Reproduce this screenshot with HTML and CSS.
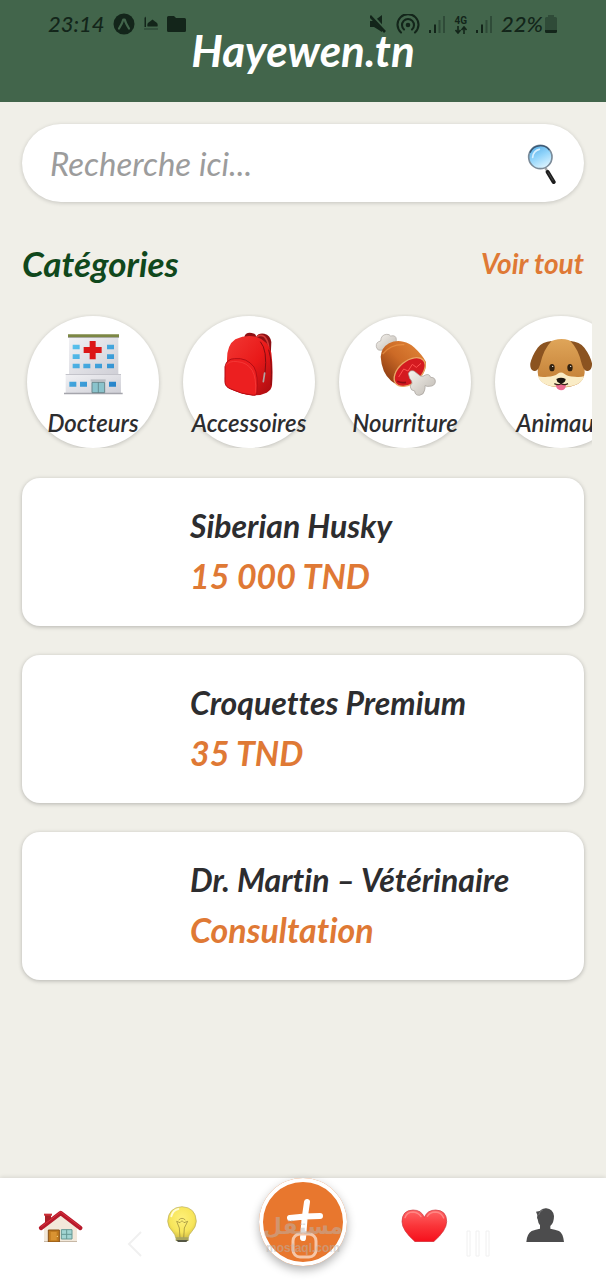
FILE: index.html
```html
<!DOCTYPE html>
<html lang="fr">
<head>
<meta charset="utf-8">
<meta name="viewport" content="width=device-width, initial-scale=1">
<title>Hayewen.tn</title>
<link rel="stylesheet" href="styles.css">
</head>
<body>
<header class="header">
  <h1 class="brand">Hayewen.tn</h1>
  <div class="status">
    <div class="status-group">
      <span class="status-text">23:14</span>
      <svg width="22" height="22" viewBox="0 0 22 22"><circle cx="11" cy="11" r="10.500" fill="#13251a"/><path d="M6 15.500Q9.500 10 10.300 6.500h1.400Q12.500 10 16 15.500" fill="none" stroke="#42654b" stroke-width="2.200" stroke-linecap="round" stroke-linejoin="round"/></svg>
      <svg width="16" height="16" viewBox="0 0 16 16"><path d="M1.500 2l.8-1.500L3 2v9H1.500zM4.500 10.500q-1-3.500 2.500-5l2.500-2 2.500 2q3.500 1.500 2.500 5z" fill="#13251a"/><path d="M1 13h14" stroke="#2f4b38" stroke-width="1.500"/></svg>
      <svg width="19" height="16" viewBox="0 0 19 16"><path d="M0 1.500Q0 0 1.500 0H7l2 2h8.500Q19 2 19 3.500V14.500Q19 16 17.500 16h-16Q0 16 0 14.500z" fill="#13251a"/></svg>
    </div>
    <div class="status-group status-right">
      <svg width="17" height="18" viewBox="0 0 17 18"><path d="M0 6h4l8-6v17l-8-5H0z" fill="#13251a"/><path d="M1 0l15 17" stroke="#42654b" stroke-width="4"/><path d="M0 1l15 16" stroke="#13251a" stroke-width="2.600"/></svg>
      <svg width="24" height="20" viewBox="0 0 24 20"><g fill="none" stroke="#13251a" stroke-width="2.100" stroke-linecap="round"><path d="M5 18.500a10.500 10.500 0 1 1 14 0"/><path d="M8 15.500a6 6 0 1 1 8 0"/></g><circle cx="12" cy="11" r="2.300" fill="#13251a"/></svg>
      <svg width="16" height="17" viewBox="0 0 16 17"><path d="M0 14h2v3H0zM5 8.500h2V17H5z" fill="#13251a"/><path d="M9.500 4h2v13h-2zM14 0h2v17h-2z" fill="#2f4b38"/></svg>
      <span class="network">4G<svg width="12" height="8" viewBox="0 0 12 8"><path d="M3 0v6M.500 4L3 7l2.500-3M9 8V2M6.500 4L9 1l2.500 3" stroke="#13251a" stroke-width="1.600" fill="none"/></svg></span>
      <svg width="16" height="17" viewBox="0 0 16 17"><path d="M0 14h2v3H0zM5 8.500h2V17H5z" fill="#13251a"/><path d="M9.500 4h2v13h-2zM14 0h2v17h-2z" fill="#2f4b38"/></svg>
      <span class="status-text battery">22%<svg width="12" height="18" viewBox="0 0 12 18"><path d="M3 2V0h6v2h1.500Q12 2 12 3.500V15H0V3.500Q0 2 1.500 2z" fill="#2f4b38"/><path d="M0 15h12v1.500Q12 18 10.500 18h-9Q0 18 0 16.500z" fill="#13251a"/></svg></span>
    </div>
  </div>
</header>

<main class="content">
  <form class="search">
    <input class="search-input" type="search" placeholder="Recherche ici..." aria-label="Recherche">
    <button class="search-button" type="button" aria-label="Rechercher">
      <svg width="32" height="42" viewBox="666 96 96 126">
        <defs><linearGradient id="lens" x1=".2" y1="0" x2=".7" y2="1"><stop offset="0" stop-color="#54aee8"/><stop offset=".5" stop-color="#95d6fb"/><stop offset="1" stop-color="#e2f6ff"/></linearGradient></defs>
        <path d="M724 174l8 12" stroke="#a5a5a5" stroke-width="7"/>
        <path d="M731 186l18 30" stroke="#1c1c1c" stroke-width="12" stroke-linecap="round"/>
        <path d="M732 187l15 25" stroke="#5b5b5b" stroke-width="2"/>
        <circle cx="709" cy="141" r="35" fill="url(#lens)" stroke="#7b8b99" stroke-width="5"/>
        <path d="M678 128a34 34 0 0 1 58-8" fill="none" stroke="#375775" stroke-width="4"/>
        <path d="M686 142q2-20 20-24" fill="none" stroke="#d7f0ff" stroke-width="5" stroke-linecap="round"/>
      </svg>
    </button>
  </form>

  <div class="section-head">
    <h2 class="section-title">Catégories</h2>
    <a class="see-all" href="#">Voir tout</a>
  </div>

  <div class="categories">
    <a class="category" href="#">
      <svg class="category-icon" viewBox="153 80 192 192">
        <defs><linearGradient id="wall" x1="0" y1="0" x2="1" y2="1"><stop offset="0" stop-color="#f1f1f4"/><stop offset="1" stop-color="#cfcfd6"/></linearGradient>
        <linearGradient id="glass" x1="0" y1="0" x2="1" y2="1"><stop offset="0" stop-color="#5cc4ee"/><stop offset="1" stop-color="#2682c9"/></linearGradient></defs>
        <path d="M177 96h148v114H177z" fill="url(#wall)"/>
        <path d="M174 87h153v10H174z" fill="#7c8744"/><path d="M174 95h153v3H174z" fill="#a8a9a2"/>
        <path d="M167 207h166v57H167z" fill="url(#wall)"/><path d="M167 206h166v3H167z" fill="#c4c4cb"/>
        <path d="M162 262h176v5H162z" fill="#a5a5ac"/>
        <path d="M239 107h18v18h18v18h-18v19h-18v-19h-18v-18h18z" fill="#dc1717"/>
        <path d="M188 118h21v14h-21zM188 147h21v14h-21zM188 175h21v14h-21zM220 175h21v14h-21zM255 175h21v14h-21zM291 118h21v14h-21zM291 147h21v14h-21zM291 175h21v14h-21zM178 229h21v15h-21zM210 229h21v15h-21zM297 229h21v15h-21z" fill="url(#glass)"/>
        <path d="M242 222h45v7h-45z" fill="#bbbec4"/><path d="M246 231h38v31h-38z" fill="#8ac3cc" stroke="#68878d" stroke-width="3"/><path d="M265 231v31" stroke="#547379" stroke-width="2"/>
      </svg>
      <span class="category-label">Docteurs</span>
    </a>
    <a class="category" href="#">
      <svg class="category-icon" viewBox="622 80 192 192">
        <defs><linearGradient id="bag" x1="0" y1="0" x2="1" y2="1"><stop offset="0" stop-color="#f23a35"/><stop offset=".55" stop-color="#e91919"/><stop offset="1" stop-color="#a60b10"/></linearGradient></defs>
        <path d="M704 94q4-14 22-11 12 1 14 11 6-12 24-9 18 4 21 25l-2 45-40-40z" fill="#8e1014"/>
        <path d="M742 94q10-8 22 0 12 12 13 34" fill="none" stroke="#d33a37" stroke-width="5"/>
        <path d="M652 166q-1-47 25-64 33-16 64-7 33 10 44 47 6 48 2 98-1 14-16 22-19 9-38 8-37-3-72-20-15-7-15-18-2-31 6-66z" fill="url(#bag)"/>
        <path d="M646 184q5-24 29-24 36-4 58 25 14 24 8 82-4 3-10 3-35-3-70-20-14-6-15-19z" fill="#ec1f20" stroke="#b20d14" stroke-width="3"/>
        <path d="M648 181q12-16 35-12 30 2 45 27 12 22 10 66" fill="none" stroke="#f8423f" stroke-width="2"/>
        <path d="M752 109q22 25 14 95l-4 20M777 133q12 40 7 106" fill="none" stroke="#850c11" stroke-width="3"/>
        <path d="M765 203l-4 26" stroke="#b6a3a1" stroke-width="5" stroke-linecap="round"/>
      </svg>
      <span class="category-label">Accessoires</span>
    </a>
    <a class="category" href="#">
      <svg class="category-icon" viewBox="159 80 192 192">
        <defs><linearGradient id="crust" x1="1" y1="0" x2="0" y2="1"><stop offset="0" stop-color="#e58a3c"/><stop offset=".5" stop-color="#cc6a26"/><stop offset="1" stop-color="#782d0c"/></linearGradient>
        <linearGradient id="bone" x1="0" y1="0" x2="1" y2="1"><stop offset="0" stop-color="#f7f4ef"/><stop offset="1" stop-color="#bdb8b1"/></linearGradient></defs>
        <path d="M169 124q-2-14 13-17 1-19 18-20 8-1 12 5 16-4 17 10 1 8-4 13l-28 23q-5 1-8-4-18 4-20-10z" fill="url(#bone)" stroke="#aaa59f" stroke-width="2"/>
        <path d="M182 154q2-27 25-40 20-10 43-5 18 3 32 17 24 22 36 44 2 26-17 46-20 22-45 24-26 1-43-14-28-24-31-72z" fill="url(#crust)"/>
        <path d="M188 146q24-30 65-28" fill="none" stroke="#f19d4d" stroke-width="4" opacity=".6"/>
        <ellipse cx="269" cy="200" rx="54" ry="33" transform="rotate(-40 269 200)" fill="#d41a20" stroke="#e8a765" stroke-width="4"/>
        <path d="M236 215l15-24 13 6 13-20 12 9 14-12" fill="none" stroke="#ff5250" stroke-width="3"/>
        <path d="M232 228q12 6 26 3" fill="none" stroke="#900d14" stroke-width="5"/>
        <path d="M265 205q4-12 17-8l19 15q8 3 15-3 12-5 16 7 15 0 14 14-2 13-19 13-5 1-12-2 1 6-1 13-2 14-15 16-14 1-15-13-12-1-13-12-1-6 5-11 1-6-7-15z" fill="url(#bone)" stroke="#a29c96" stroke-width="2"/>
      </svg>
      <span class="category-label">Nourriture</span>
    </a>
    <a class="category" href="#">
      <svg class="category-icon" viewBox="630 80 192 192">
        <defs><linearGradient id="fur" x1="0" y1="0" x2="0" y2="1"><stop offset="0" stop-color="#dfa559"/><stop offset="1" stop-color="#c17c33"/></linearGradient></defs>
        <path d="M656 200q2 45 70 46 67 0 71-44 1-31-12-55-13-46-57-46-47 0-58 44-14 24-14 55z" fill="url(#fur)"/>
        <path d="M698 107q-28 2-42 20-17 24-22 47-2 20 11 23 11 2 18-19 11-48 35-71zM754 107q28 2 42 20 18 24 23 47 1 20-12 23-11 2-18-19-11-48-35-71z" fill="#8b5320"/>
        <path d="M657 213q12 3 28 1 22-1 31-9 10-7 20 0 9 9 32 9 14 3 27-1-8 32-69 32-59 0-69-32z" fill="#faecc6"/>
        <ellipse cx="699" cy="187" rx="8" ry="11" fill="#30200f"/><ellipse cx="753" cy="187" rx="8" ry="11" fill="#30200f"/>
        <circle cx="701" cy="183" r="2" fill="#fff"/><circle cx="755" cy="183" r="2" fill="#fff"/>
        <path d="M710 239q16-6 31 0-1 16-15 16-14-2-16-16z" fill="#ed6b91"/>
        <path d="M726 224v13M706 235q12 6 20 0 10 6 21 0" fill="none" stroke="#392519" stroke-width="4"/>
        <path d="M712 221q14-8 28 0-1 10-9 12-5 3-10 0-8-3-9-12z" fill="#19130f"/>
      </svg>
      <span class="category-label">Animaux</span>
    </a>
  </div>

  <section class="cards">
    <article class="card"><div class="thumb"></div><div><h3 class="card-name">Siberian Husky</h3><p class="card-price">15 000 TND</p></div></article>
    <article class="card"><div class="thumb"></div><div><h3 class="card-name">Croquettes Premium</h3><p class="card-price">35 TND</p></div></article>
    <article class="card"><div class="thumb"></div><div><h3 class="card-name">Dr. Martin – Vétérinaire</h3><p class="card-price">Consultation</p></div></article>
  </section>
</main>

<nav class="tabs">
  <a class="tab" href="#" aria-label="Accueil">
    <svg width="48" height="36" viewBox="111 108 144 108">
      <path d="M135 133h18v35h-18z" fill="#a82027"/><path d="M132 131h24v6h-24z" fill="#cc3038"/>
      <path d="M132 172l50-42 49 42v44h-99z" fill="#f2e8da"/><path d="M132 213h99v3h-99z" fill="#c7b8a6"/>
      <path d="M145 180h33v36h-33z" fill="#c17b1f" stroke="#875015" stroke-width="3"/><path d="M152 186h18v25h-18z" fill="#d99332"/><circle cx="172" cy="199" r="2" fill="#fbe192"/>
      <path d="M184 179h32v28h-32z" fill="#a1d4d2" stroke="#649894" stroke-width="3"/><path d="M200 179v28M184 193h32" stroke="#649894" stroke-width="3"/>
      <path d="M123 174l59-45 59 45" fill="none" stroke="#b71a2b" stroke-width="13" stroke-linecap="round" stroke-linejoin="round"/><path d="M124 170l58-44 58 44" fill="none" stroke="#d9323f" stroke-width="3"/>
    </svg>
  </a>
  <a class="tab" href="#" aria-label="Conseils">
    <svg width="48" height="36" viewBox="473 108 144 108">
      <defs><radialGradient id="bulb" cx=".5" cy=".4" r=".6"><stop offset="0" stop-color="#fff17b"/><stop offset=".7" stop-color="#f7e55a"/><stop offset="1" stop-color="#d9c548"/></radialGradient></defs>
      <path d="M526 203q-1-9-9-18-14-13-15-31 2-42 43-44 41 2 43 44-1 18-14 31-9 9-10 18z" fill="url(#bulb)" stroke="#b9ad5c" stroke-width="2"/>
      <path d="M539 205l-2-31-8-20 10 4 6-6 6 6 11-4-10 20-2 31M535 150q10-10 20 0" fill="none" stroke="#8f8136" stroke-width="2"/>
      <path d="M513 139q5-19 21-22" stroke="#fffbd2" stroke-width="6" fill="none" stroke-linecap="round"/>
      <path d="M526 202h39v10q-19 5-39 0z" fill="#aaa65d"/><path d="M528 210h35l-5 6h-25z" fill="#555744"/>
    </svg>
  </a>
  <div class="tab-center">
    <button class="add" type="button" aria-label="Ajouter">
      <svg width="88" height="88" viewBox="0 0 88 88">
        <path d="M48 24q-3 17-4 36M31 40q15-2 30-2" fill="none" stroke="#fff" stroke-width="6" stroke-linecap="round"/>
        <rect x="34" y="56" width="23" height="23" rx="7" fill="none" stroke="#f5c6a8" stroke-width="3"/>
      </svg>
    </button>
    <div class="watermark"><span class="mark-ar" lang="ar">مستقل</span><span class="mark-en">mostaql.com</span></div>
  </div>
  <a class="tab" href="#" aria-label="Favoris">
    <svg width="48" height="36" viewBox="30 108 144 108">
      <defs><linearGradient id="heart" x1="0" y1="0" x2="0" y2="1"><stop offset="0" stop-color="#ff6565"/><stop offset=".5" stop-color="#fa3539"/><stop offset="1" stop-color="#f60f1b"/></linearGradient></defs>
      <path d="M75 215Q36 181 36 155q0-34 33-35 25 0 34 22 9-22 34-22 33 1 33 35 0 26-39 60z" fill="url(#heart)" stroke="#c9353c" stroke-width="2"/>
      <path d="M45 143q6-17 24-17 16 1 24 14M112 139q8-13 25-13 17 1 24 18" fill="none" stroke="#ff8684" stroke-width="4" stroke-linecap="round"/>
    </svg>
  </a>
  <a class="tab" href="#" aria-label="Profil">
    <svg width="48" height="36" viewBox="393 108 144 108">
      <path d="M409 216q2-25 16-33 12-4 25-7v-10q-6-7-7-18-3-4-1-13l-4-10 11-2q8-9 20-8 20 2 23 23 0 21-11 30v8q14 3 26 7 12 6 15 33z" fill="#4c4c4d"/>
      <path d="M446 135q3-12 13-16" fill="none" stroke="#8a8a8a" stroke-width="2"/>
    </svg>
  </a>
  <svg class="sys-back" width="16" height="28" viewBox="0 0 16 28"><path d="M14 2L2 14l12 12" fill="none" stroke="#f0f0f0" stroke-width="2"/></svg>
  <svg class="sys-recent" width="26" height="28" viewBox="0 0 26 28"><path d="M2 1h3v25H2zM11 1h3v25h-3zM21 1h3v25h-3z" fill="#fff" stroke="#f0f0f0"/></svg>
</nav>
</body>
</html>
```

FILE: styles.css
```css
* { box-sizing: border-box; }

body {
  margin: 0;
  min-height: 100vh;
  display: flex;
  flex-direction: column;
  background: #f0efe8;
  color: #2d2d2f;
  font-family: Lato, "Open Sans", sans-serif;
  font-style: italic;
  font-variant-ligatures: none;
}

h1, h2, h3, p { margin: 0; }
a { text-decoration: none; }
button { border: 0; padding: 0; background: none; cursor: pointer; }
svg { display: block; flex: none; }

.header {
  position: relative;
  padding: 20px 22px 22px;
  background: #42654b;
}

.brand {
  text-align: center;
  color: #fff;
  font-size: 44px;
  line-height: 60px;
  font-weight: 700;
}

.status {
  position: absolute;
  top: 12px;
  left: 48px;
  right: 49px;
  height: 24px;
  display: flex;
  justify-content: space-between;
}

.status-group {
  display: flex;
  align-items: center;
  gap: 8px;
}

.status-right { gap: 9px; }

.status-text {
  color: #13251a;
  font-size: 22px;
  line-height: 24px;
  font-weight: 500;
}

.network {
  display: flex;
  flex-direction: column;
  align-items: center;
  color: #13251a;
  font: 700 10px/11px Roboto, sans-serif;
}

.battery {
  display: flex;
  align-items: center;
  gap: 2px;
}

.content {
  flex: 1;
  padding: 22px;
}

.search {
  display: flex;
  align-items: center;
  height: 78px;
  padding: 0 26px 0 28px;
  border-radius: 39px;
  background: #fff;
  box-shadow: 0 1px 4px rgba(0, 0, 0, 0.18);
}

.search-input {
  flex: 1;
  min-width: 0;
  padding: 0;
  border: 0;
  outline: 0;
  background: none;
  color: #2d2d2f;
  font: inherit;
  font-size: 33px;
  line-height: 40px;
}

.search-input::placeholder { color: #9c9c9c; opacity: 1; }

.section-head {
  display: flex;
  align-items: center;
  justify-content: space-between;
  margin: 40px 0 30px;
}

.section-title {
  color: #10481c;
  font-size: 35px;
  line-height: 42px;
  font-weight: 700;
}

.see-all {
  color: #df7935;
  font-size: 28px;
  line-height: 42px;
  font-weight: 700;
}

.categories {
  display: flex;
  gap: 24px;
  margin: 0 -8px 30px;
  padding: 2px 13px 0;
  overflow-x: auto;
  scrollbar-width: none;
}

.category {
  flex: none;
  display: flex;
  flex-direction: column;
  align-items: center;
  gap: 14px;
  width: 132px;
  height: 132px;
  padding-top: 16px;
  border-radius: 50%;
  background: #fff;
  box-shadow: 0 1px 4px rgba(0, 0, 0, 0.2);
  color: #2d2d2f;
}

.category-icon { width: 64px; height: 64px; }

.category-label {
  font-size: 24px;
  line-height: 26px;
  font-weight: 600;
}

.cards {
  display: flex;
  flex-direction: column;
  gap: 29px;
}

.card {
  display: flex;
  align-items: center;
  gap: 22px;
  padding: 22px;
  border-radius: 18px;
  background: #fff;
  box-shadow: 0 1px 4px rgba(0, 0, 0, 0.25);
}

.thumb {
  flex: none;
  width: 124px;
  height: 104px;
}

.card-name {
  font-size: 32px;
  line-height: 48px;
  font-weight: 700;
}

.card-price {
  color: #df7935;
  font-size: 34px;
  line-height: 52px;
  font-weight: 700;
}

.tabs {
  position: sticky;
  bottom: 0;
  display: grid;
  grid-template-columns: repeat(5, 1fr);
  justify-items: center;
  height: 102px;
  background: #fff;
  box-shadow: 0 -1px 4px rgba(0, 0, 0, 0.1);
}

.tab { padding-top: 28px; }

.tab-center { position: relative; }

.add {
  width: 88px;
  height: 88px;
  border-radius: 50%;
  background: #e8772e;
  box-shadow: inset 0 0 0 4px #fff, 0 4px 10px rgba(0, 0, 0, 0.3);
}

.watermark {
  position: absolute;
  top: 36px;
  left: 0;
  right: 0;
  display: flex;
  flex-direction: column;
  align-items: center;
  color: #b9b4b0;
  opacity: 0.5;
  font-style: normal;
  font-weight: 700;
  pointer-events: none;
}

.mark-ar {
  font-family: "DejaVu Sans", sans-serif;
  font-size: 22px;
  line-height: 26px;
}

.mark-en {
  font-family: "Liberation Sans", sans-serif;
  font-size: 12px;
  line-height: 16px;
}

.sys-back {
  position: absolute;
  left: 21%;
  top: 52px;
}

.sys-recent {
  position: absolute;
  right: 19%;
  top: 52px;
}
```
